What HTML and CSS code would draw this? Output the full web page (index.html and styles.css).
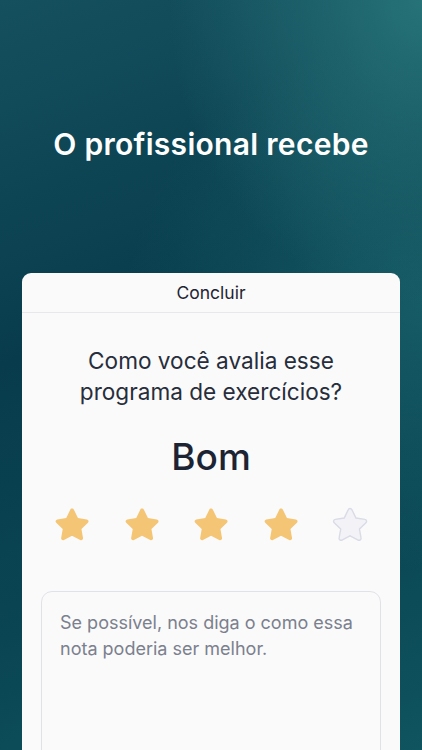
FILE: index.html
```html
<!DOCTYPE html>
<html lang="pt-BR">
<head>
  <meta charset="UTF-8" />
  <meta name="viewport" content="width=device-width, initial-scale=1" />
  <title>O profissional recebe</title>
  <link rel="stylesheet" href="styles.css">
</head>

<body>
  <div class="screen">
    <h1 class="headline">O profissional recebe</h1>

    <div class="sheet">
      <div class="sheet-header">Concluir</div>

      <div class="sheet-body">
        <p class="question">Como você avalia esse programa de exercícios?</p>
        <p class="rating-label">Bom</p>

        <div class="stars">
          <svg class="star filled" viewBox="0 0 24 24"><path d="M12 2.6c.5 0 .9.3 1.1.7l2.3 4.7 5.1.8c.9.1 1.3 1.3.6 1.9l-3.7 3.6.9 5.1c.2.9-.8 1.6-1.6 1.2L12 18.2l-4.6 2.4c-.8.4-1.8-.3-1.6-1.2l.9-5.1-3.7-3.6c-.7-.6-.3-1.8.6-1.9l5.1-.8 2.3-4.7c.1-.4.5-.7 1-.7z"/></svg>
          <svg class="star filled" viewBox="0 0 24 24"><path d="M12 2.6c.5 0 .9.3 1.1.7l2.3 4.7 5.1.8c.9.1 1.3 1.3.6 1.9l-3.7 3.6.9 5.1c.2.9-.8 1.6-1.6 1.2L12 18.2l-4.6 2.4c-.8.4-1.8-.3-1.6-1.2l.9-5.1-3.7-3.6c-.7-.6-.3-1.8.6-1.9l5.1-.8 2.3-4.7c.1-.4.5-.7 1-.7z"/></svg>
          <svg class="star filled" viewBox="0 0 24 24"><path d="M12 2.6c.5 0 .9.3 1.1.7l2.3 4.7 5.1.8c.9.1 1.3 1.3.6 1.9l-3.7 3.6.9 5.1c.2.9-.8 1.6-1.6 1.2L12 18.2l-4.6 2.4c-.8.4-1.8-.3-1.6-1.2l.9-5.1-3.7-3.6c-.7-.6-.3-1.8.6-1.9l5.1-.8 2.3-4.7c.1-.4.5-.7 1-.7z"/></svg>
          <svg class="star filled" viewBox="0 0 24 24"><path d="M12 2.6c.5 0 .9.3 1.1.7l2.3 4.7 5.1.8c.9.1 1.3 1.3.6 1.9l-3.7 3.6.9 5.1c.2.9-.8 1.6-1.6 1.2L12 18.2l-4.6 2.4c-.8.4-1.8-.3-1.6-1.2l.9-5.1-3.7-3.6c-.7-.6-.3-1.8.6-1.9l5.1-.8 2.3-4.7c.1-.4.5-.7 1-.7z"/></svg>
          <svg class="star empty" viewBox="0 0 24 24"><path d="M12 2.6c.5 0 .9.3 1.1.7l2.3 4.7 5.1.8c.9.1 1.3 1.3.6 1.9l-3.7 3.6.9 5.1c.2.9-.8 1.6-1.6 1.2L12 18.2l-4.6 2.4c-.8.4-1.8-.3-1.6-1.2l.9-5.1-3.7-3.6c-.7-.6-.3-1.8.6-1.9l5.1-.8 2.3-4.7c.1-.4.5-.7 1-.7z"/></svg>
        </div>

        <textarea class="feedback" placeholder="Se possível, nos diga o como essa nota poderia ser melhor."></textarea>
      </div>
    </div>
  </div>
</body>
</html>
```

FILE: styles.css
```css
* {
  box-sizing: border-box;
}

html, body {
  margin: 0;
  padding: 0;
  height: 100%;
  overflow: hidden;
}

body {
  font-family: 'Inter', 'Lato', sans-serif;
  -webkit-font-smoothing: antialiased;
}

.screen {
  min-height: 100vh;
  padding: 0 22px;
  display: flex;
  flex-direction: column;
  background:
    radial-gradient(ellipse 60% 40% at 100% 0%, rgba(42, 122, 126, 0.85), rgba(42, 122, 126, 0) 100%),
    radial-gradient(ellipse 70% 35% at 100% 40%, rgba(30, 110, 118, 0.6), rgba(30, 110, 118, 0) 100%),
    linear-gradient(160deg, #15505f 0%, #083c4c 40%, #0a4553 70%, #0f5560 100%);
}

.headline {
  margin: 124px 0 0;
  text-align: center;
  color: #ffffff;
  font-size: 30px;
  font-weight: 600;
  line-height: 40px;
  letter-spacing: 0.3px;
}

.sheet {
  margin-top: 109px;
  flex: 1;
  background: #fafafa;
  border-radius: 9px 9px 0 0;
}

.sheet-header {
  height: 40px;
  line-height: 39px;
  text-align: center;
  font-size: 17.5px;
  font-weight: 400;
  color: #1f2433;
  border-bottom: 1px solid #e8e8ec;
}

.sheet-body {
  padding: 0 19px;
  display: flex;
  flex-direction: column;
}

.question {
  margin: 32px 16px 0;
  text-align: center;
  font-size: 22.6px;
  line-height: 31px;
  color: #272d3a;
}

.rating-label {
  margin: 28px 0 0;
  text-align: center;
  font-size: 37px;
  font-weight: 500;
  line-height: 44px;
  color: #1c2434;
}

.stars {
  margin-top: 25px;
  display: flex;
  justify-content: space-between;
  padding: 0 10px;
}

.star {
  width: 42px;
  height: 42px;
}

.star.filled path {
  fill: #f4c574;
}

.star.empty path {
  fill: #f3f3f7;
  stroke: #d9dbe6;
  stroke-width: 0.8;
}

.feedback {
  margin-top: 45px;
  height: 170px;
  width: 100%;
  padding: 18px 18px;
  border: 1px solid #e1e2e8;
  border-radius: 11px;
  background: #fafafa;
  font-family: inherit;
  font-size: 18px;
  line-height: 26px;
  color: #1f2433;
  resize: none;
  outline: none;
}

.feedback::placeholder {
  color: #7b808e;
}
```
